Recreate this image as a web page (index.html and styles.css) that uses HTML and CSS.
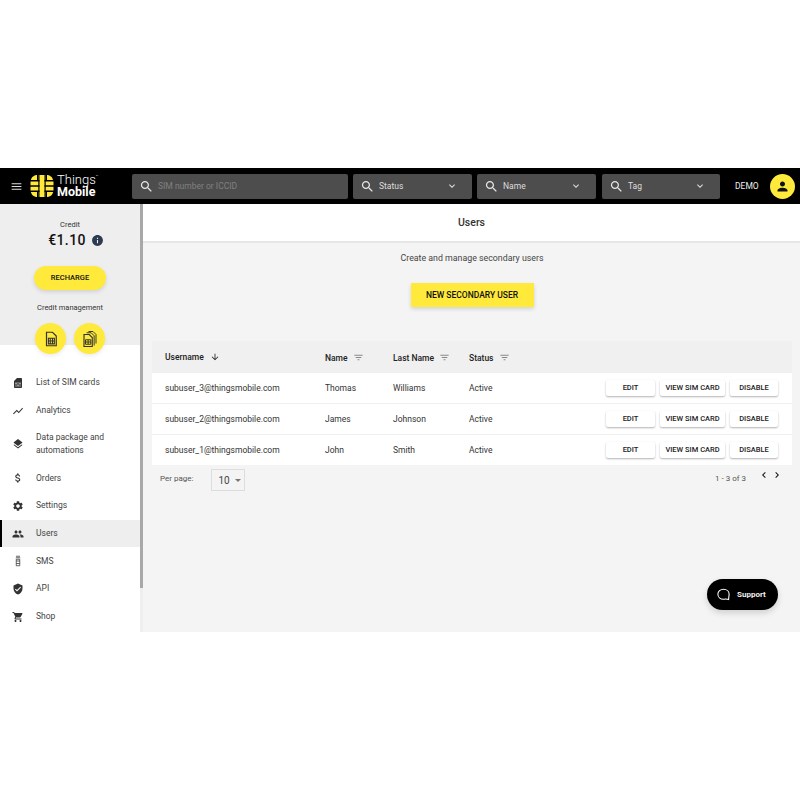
FILE: index.html
```html
<!DOCTYPE html>
<html lang="en">
<head>
    <meta charset="UTF-8">
    <title>Users - Things Mobile</title>
    <link rel="stylesheet" href="styles.css">
</head>
<body>
    <svg class="defs" width="0" height="0">
        <symbol id="i-search" viewBox="0 0 24 24"><path d="M15.5 14h-.79l-.28-.27C15.41 12.59 16 11.11 16 9.5 16 5.91 13.09 3 9.5 3S3 5.91 3 9.5 5.91 16 9.5 16c1.61 0 3.09-.59 4.23-1.57l.27.28v.79l5 4.99L20.49 19l-4.99-5zm-6 0C7.01 14 5 11.99 5 9.5S7.01 5 9.5 5 14 7.01 14 9.5 11.99 14 9.5 14z"/></symbol>
        <symbol id="i-more" viewBox="0 0 24 24"><path d="M16.59 8.59L12 13.17 7.41 8.59 6 10l6 6 6-6z"/></symbol>
        <symbol id="i-filter" viewBox="0 0 24 24"><path d="M10 18h4v-2h-4v2zM3 6v2h18V6H3zm3 7h12v-2H6v2z"/></symbol>
        <symbol id="i-simcard" viewBox="0 0 24 24"><path fill="none" stroke="#333" stroke-width="1.6" d="M6 3h8l5 5v13H6z"/><path fill="none" stroke="#333" stroke-width="1.4" d="M8.5 11h8v7.500h-8zM11 11v7.500M14 11v7.500M8.500 14.700h8"/></symbol>
        <symbol id="i-simcards" viewBox="0 0 24 24"><path fill="none" stroke="#333" stroke-width="1.3" d="M10 2h6l4 4v12M7.500 3.700h6l4 4v13"/><path fill="none" stroke="#333" stroke-width="1.500" d="M4 6h7l4 4v12H4z"/><path fill="none" stroke="#333" stroke-width="1.300" d="M6 13h7v6H6zM6 16h7M9.500 13v6"/></symbol>
    </svg>

    <div class="app">
        <header class="topbar">
            <svg class="menu-icon" viewBox="0 0 24 24"><path d="M3 18h18v-2H3v2zm0-5h18v-2H3v2zm0-7v2h18V6H3z"/></svg>
            <div class="logo">
                <svg class="logo-chip" viewBox="0 0 24 22">
                    <path fill="#ffe93b" d="M8 0h8c4 0 6.500 2 7 5H0.900C1.500 2 4 0 8 0zM0.500 6.500h23v3.700h-23zM0.500 11.700h23v3.700h-23zM0.900 17h22.200c-.5 3-3 5-7.100 5H8c-4 0-6.500-2-7.100-5z"/>
                    <path fill="#000" d="M7 0h1.300v5.500H7zM15.700 0H17v5.500h-1.300zM7 16.500h1.300V22H7zM15.700 16.500H17V22h-1.300z"/>
                    <path fill="#ffe93b" d="M9.500 0h5v22h-5z"/>
                    <path fill="#000" d="M8.300 0h1.200v22H8.300zM14.500 0h1.200v22h-1.200z"/>
                </svg>
                <div class="logo-text">
                    <span class="logo-top">Things<sup>™</sup></span>
                    <span class="logo-bottom">Mobile</span>
                </div>
            </div>
            <div class="field field-sim">
                <svg class="field-search"><use href="#i-search"/></svg>
                <span class="field-hint">SIM number or ICCID</span>
            </div>
            <div class="field field-status">
                <svg class="field-search"><use href="#i-search"/></svg>
                <span class="field-label">Status</span>
                <svg class="field-more"><use href="#i-more"/></svg>
            </div>
            <div class="field field-name">
                <svg class="field-search"><use href="#i-search"/></svg>
                <span class="field-label">Name</span>
                <svg class="field-more"><use href="#i-more"/></svg>
            </div>
            <div class="field field-tag">
                <svg class="field-search"><use href="#i-search"/></svg>
                <span class="field-label">Tag</span>
                <svg class="field-more"><use href="#i-more"/></svg>
            </div>
            <span class="demo">DEMO</span>
            <div class="avatar">
                <svg viewBox="0 0 24 24"><path d="M12 12c2.210 0 4-1.790 4-4s-1.790-4-4-4-4 1.790-4 4 1.790 4 4 4zm0 2c-2.670 0-8 1.340-8 4v2h16v-2c0-2.660-5.330-4-8-4z"/></svg>
            </div>
        </header>

        <div class="content">
            <aside class="sidebar">
                <div class="credit">
                    <div class="credit-label">Credit</div>
                    <div class="credit-value">
                        <span>€1.10</span>
                        <svg class="info-icon" viewBox="0 0 24 24"><path d="M12 2C6.480 2 2 6.480 2 12s4.480 10 10 10 10-4.480 10-10S17.520 2 12 2zm1 15h-2v-6h2v6zm0-8h-2V7h2v2z"/></svg>
                    </div>
                    <div class="progress"><div class="progress-fill" style="width: 10%;"></div></div>
                    <div class="recharge">RECHARGE</div>
                    <div class="credit-sub">Credit management</div>
                    <div class="credit-actions">
                        <div class="round-btn"><svg><use href="#i-simcard"/></svg></div>
                        <div class="round-btn"><svg><use href="#i-simcards"/></svg></div>
                    </div>
                </div>
                <nav class="nav">
                    <div class="nav-item">
                        <svg viewBox="0 0 24 24"><path d="M19.990 4c0-1.100-.890-2-1.990-2h-8L4 8v12c0 1.100.900 2 2 2h12c1.100 0 2-.900 2-2l-.010-16zM9 19H7v-2h2v2zm8 0h-2v-2h2v2zm-8-4H7v-4h2v4zm4 4h-2v-4h2v4zm0-6h-2v-2h2v2zm4 2h-2v-4h2v4z"/></svg>
                        <span>List of SIM cards</span>
                    </div>
                    <div class="nav-item">
                        <svg viewBox="0 0 24 24"><path d="M3.500 18.490l6-6.010 4 4L22 6.920l-1.410-1.410-7.090 7.970-4-4L2 16.990z"/></svg>
                        <span>Analytics</span>
                    </div>
                    <div class="nav-item nav-item-tall">
                        <svg viewBox="0 0 24 24"><path d="M11.990 18.540l-7.370-5.730L3 14.070l9 7 9-7-1.630-1.270-7.380 5.740zM12 16l7.360-5.730L21 9l-9-7-9 7 1.630 1.270L12 16z"/></svg>
                        <span>Data package and automations</span>
                    </div>
                    <div class="nav-item">
                        <svg viewBox="0 0 24 24"><path d="M11.800 10.900c-2.270-.590-3-1.200-3-2.150 0-1.090 1.010-1.850 2.700-1.850 1.780 0 2.440.850 2.500 2.100h2.210c-.070-1.720-1.120-3.300-3.210-3.810V3h-3v2.160c-1.940.420-3.500 1.680-3.500 3.610 0 2.310 1.910 3.460 4.700 4.130 2.500.600 3 1.480 3 2.410 0 .690-.490 1.790-2.700 1.790-2.060 0-2.870-.920-2.980-2.100h-2.200c.120 2.190 1.760 3.420 3.680 3.830V21h3v-2.150c1.950-.370 3.500-1.500 3.500-3.550 0-2.840-2.430-3.810-4.700-4.400z"/></svg>
                        <span>Orders</span>
                    </div>
                    <div class="nav-item">
                        <svg viewBox="0 0 24 24"><path d="M19.140 12.940c.040-.300.060-.610.060-.940 0-.320-.020-.640-.070-.940l2.030-1.580c.180-.140.230-.410.120-.610l-1.920-3.320c-.120-.220-.370-.290-.590-.220l-2.390.960c-.500-.380-1.030-.700-1.620-.940l-.360-2.540c-.040-.240-.240-.410-.480-.410h-3.840c-.240 0-.430.170-.470.410l-.360 2.540c-.590.240-1.130.570-1.620.940l-2.390-.960c-.220-.080-.470 0-.590.220L2.740 8.870c-.120.210-.080.470.120.610l2.030 1.580c-.050.300-.090.630-.090.940s.020.640.070.940l-2.030 1.580c-.180.140-.230.410-.120.610l1.920 3.320c.120.220.370.290.590.220l2.390-.960c.500.380 1.030.700 1.620.940l.360 2.540c.050.240.240.410.480.410h3.840c.240 0 .440-.170.470-.410l.360-2.540c.590-.240 1.130-.560 1.620-.940l2.390.960c.220.080.470 0 .590-.220l1.920-3.320c.120-.220.070-.470-.120-.610l-2.010-1.580zM12 15.600c-1.980 0-3.600-1.620-3.600-3.600s1.620-3.600 3.600-3.600 3.600 1.620 3.600 3.600-1.620 3.600-3.600 3.600z"/></svg>
                        <span>Settings</span>
                    </div>
                    <div class="nav-item nav-item-active">
                        <svg viewBox="0 0 24 24"><path d="M16 11c1.660 0 2.990-1.340 2.990-3S17.660 5 16 5c-1.660 0-3 1.340-3 3s1.340 3 3 3zm-8 0c1.660 0 2.990-1.340 2.990-3S9.660 5 8 5C6.340 5 5 6.340 5 8s1.340 3 3 3zm0 2c-2.330 0-7 1.170-7 3.500V19h14v-2.500c0-2.330-4.670-3.500-7-3.500zm8 0c-.290 0-.620.020-.970.050 1.160.840 1.970 1.970 1.970 3.450V19h6v-2.500c0-2.330-4.670-3.500-7-3.500z"/></svg>
                        <span>Users</span>
                    </div>
                    <div class="nav-item">
                        <svg viewBox="0 0 24 24"><path fill="none" stroke="#333" stroke-width="1.500" d="M8 2.500h8M7.500 5.500h9M8.500 8.500h7v13h-7zM8.500 12h7M8.500 17h7"/></svg>
                        <span>SMS</span>
                    </div>
                    <div class="nav-item">
                        <svg viewBox="0 0 24 24"><path d="M12 1L3 5v6c0 5.550 3.840 10.740 9 12 5.160-1.260 9-6.450 9-12V5l-9-4zm-2 16l-4-4 1.410-1.410L10 14.170l6.590-6.590L18 9l-8 8z"/></svg>
                        <span>API</span>
                    </div>
                    <div class="nav-item">
                        <svg viewBox="0 0 24 24"><path d="M7 18c-1.100 0-1.990.900-1.990 2S5.900 22 7 22s2-.900 2-2-.900-2-2-2zM1 2v2h2l3.600 7.590-1.350 2.450c-.160.280-.250.610-.250.960 0 1.100.900 2 2 2h12v-2H7.420c-.140 0-.250-.110-.250-.250l.030-.120.900-1.830h7.450c.750 0 1.410-.410 1.750-1.030l3.580-6.490c.080-.140.120-.310.120-.480 0-.550-.450-1-1-1H5.210l-.940-2H1zm16 16c-1.100 0-1.990.900-1.990 2s.890 2 1.990 2 2-.900 2-2-.900-2-2-2z"/></svg>
                        <span>Shop</span>
                    </div>
                </nav>
            </aside>
            <div class="scrollbar"><div class="scrollbar-thumb"></div></div>

            <main class="main">
                <div class="page-title">Users</div>
                <div class="page-body">
                    <p class="page-sub">Create and manage secondary users</p>
                    <div class="new-user">NEW SECONDARY USER</div>

                    <table class="users">
                        <thead>
                            <tr>
                                <th class="col-user">Username <svg class="sort-icon" viewBox="0 0 24 24"><path d="M20 12l-1.410-1.410L13 16.170V4h-2v12.170l-5.580-5.590L4 12l8 8 8-8z"/></svg></th>
                                <th class="col-name">Name <svg class="filter-icon"><use href="#i-filter"/></svg></th>
                                <th class="col-last">Last Name <svg class="filter-icon"><use href="#i-filter"/></svg></th>
                                <th class="col-status">Status <svg class="filter-icon"><use href="#i-filter"/></svg></th>
                                <th></th>
                            </tr>
                        </thead>
                        <tbody>
                            <tr>
                                <td>subuser_3@thingsmobile.com</td>
                                <td>Thomas</td>
                                <td>Williams</td>
                                <td>Active</td>
                                <td><div class="actions"><span class="btn btn-edit">EDIT</span><span class="btn btn-view">VIEW SIM CARD</span><span class="btn btn-disable">DISABLE</span></div></td>
                            </tr>
                            <tr>
                                <td>subuser_2@thingsmobile.com</td>
                                <td>James</td>
                                <td>Johnson</td>
                                <td>Active</td>
                                <td><div class="actions"><span class="btn btn-edit">EDIT</span><span class="btn btn-view">VIEW SIM CARD</span><span class="btn btn-disable">DISABLE</span></div></td>
                            </tr>
                            <tr>
                                <td>subuser_1@thingsmobile.com</td>
                                <td>John</td>
                                <td>Smith</td>
                                <td>Active</td>
                                <td><div class="actions"><span class="btn btn-edit">EDIT</span><span class="btn btn-view">VIEW SIM CARD</span><span class="btn btn-disable">DISABLE</span></div></td>
                            </tr>
                        </tbody>
                    </table>

                    <div class="pager">
                        <span class="per-page">Per page:</span>
                        <div class="per-select"><span>10</span><i class="caret"></i></div>
                        <span class="pager-count">1 - 3 of 3</span>
                        <div class="pager-arrows">
                            <svg viewBox="0 0 24 24"><path d="M15.410 7.410L14 6l-6 6 6 6 1.410-1.410L10.830 12z"/></svg>
                            <svg viewBox="0 0 24 24"><path d="M10 6L8.590 7.410 13.170 12l-4.580 4.580L10 18l6-6z"/></svg>
                        </div>
                    </div>
                </div>

                <div class="support">
                    <svg viewBox="0 0 24 24"><path fill="none" stroke="#fff" stroke-width="1.700" d="M12 3.500c5 0 9 3.300 9 8 0 2.500-.8 5-.8 8.500-2-.8-3.500-1-5-.9-.9.200-2 .4-3.200.4-5 0-9-3.300-9-8s4-8 9-8z"/></svg>
                    <span>Support</span>
                </div>
            </main>
        </div>
    </div>
</body>
</html>
```

FILE: styles.css
```css
body {
    margin: 0;
    padding-top: 168px;
    background: #fff;
    font-family: Roboto, "Liberation Sans", sans-serif;
    color: #333;
}
.defs {
    display: block;
    height: 0;
}

.app {
    height: 464px;
    display: flex;
    flex-direction: column;
    overflow: hidden;
}

/* top bar */
.topbar {
    height: 36px;
    flex: none;
    background: #000;
    display: flex;
    align-items: center;
    box-sizing: border-box;
    padding-left: 10px;
}
.menu-icon {
    width: 13px;
    height: 13px;
    fill: #ddd;
    flex: none;
}
.logo {
    display: flex;
    align-items: center;
    width: 102px;
    margin-left: 7px;
    flex: none;
    gap: 3px;
}
.logo-chip {
    width: 24px;
    height: 22px;
    flex: none;
}
.logo-text {
    display: flex;
    flex-direction: column;
    color: #fff;
    line-height: 12px;
}
.logo-top {
    font-size: 13px;
    font-weight: 300;
}
.logo-top sup {
    font-size: 4px;
    vertical-align: 6px;
    line-height: 0;
}
.logo-bottom {
    font-size: 12.5px;
    font-weight: 700;
}
.field {
    height: 25px;
    background: #4d4d4d;
    border-radius: 2px;
    display: flex;
    align-items: center;
    box-sizing: border-box;
    padding: 0 14px 0 7px;
    margin-right: 5px;
    flex: none;
}
.field-sim { width: 216px; }
.field-status { width: 119px; }
.field-name { width: 119px; }
.field-tag { width: 118px; margin-left: 1px; }
.field-search {
    width: 15px;
    height: 15px;
    fill: #e8e8e8;
    flex: none;
}
.field-hint {
    margin-left: 4px;
    font-size: 8.500px;
    color: #808080;
}
.field-label {
    margin-left: 4px;
    font-size: 8.500px;
    color: #ddd;
    flex: 1;
}
.field-more {
    width: 12px;
    height: 12px;
    fill: #ddd;
    flex: none;
}
.demo {
    margin-left: 10px;
    font-size: 8.500px;
    color: #eee;
}
.avatar {
    width: 25px;
    height: 25px;
    margin-left: 11px;
    box-sizing: border-box;
    border-radius: 50%;
    background: #ffe93b;
    display: flex;
    align-items: center;
    justify-content: center;
    flex: none;
}
.avatar svg {
    width: 15px;
    height: 15px;
    fill: #111;
}

.content {
    flex: 1;
    display: flex;
    min-height: 0;
}

/* sidebar */
.sidebar {
    width: 140px;
    flex: none;
    background: #fff;
    overflow: hidden;
}
.credit {
    background: #eee;
    height: 141px;
    box-sizing: border-box;
    padding-top: 16px;
    display: flex;
    flex-direction: column;
    align-items: center;
}
.credit-label {
    font-size: 7.500px;
    line-height: 9px;
    color: #333;
}
.credit-value {
    margin-top: 3px;
    display: flex;
    align-items: center;
    font-size: 14px;
    line-height: 17px;
    font-weight: 500;
    letter-spacing: .4px;
    color: #111;
    gap: 5px;
    padding-left: 12px;
}
.info-icon {
    width: 13px;
    height: 13px;
    fill: #2c3a52;
}
.progress {
    width: 118px;
    height: 5px;
    margin-top: 6px;
    background: #fff;
    border-radius: 3px;
    overflow: hidden;
}
.progress-fill {
    height: 100%;
    background: #ffe93b;
}
.recharge {
    width: 72px;
    height: 24px;
    margin-top: 11px;
    border-radius: 12px;
    background: #ffe93b;
    box-shadow: 0 2px 4px rgba(0,0,0,.12);
    font-size: 7.500px;
    font-weight: 500;
    line-height: 24px;
    text-align: center;
    color: #111;
}
.credit-sub {
    margin-top: 13px;
    font-size: 7.500px;
    line-height: 10px;
}
.credit-actions {
    margin-top: 10px;
    display: flex;
    gap: 8px;
    position: relative;
}
.round-btn {
    width: 31px;
    height: 31px;
    border-radius: 50%;
    background: #ffe93b;
    box-shadow: 0 2px 4px rgba(0,0,0,.08);
    display: flex;
    align-items: center;
    justify-content: center;
}
.round-btn svg {
    width: 18px;
    height: 18px;
}
.nav {
    padding-top: 24px;
}
.nav-item {
    height: 27.700px;
    display: flex;
    align-items: center;
    padding-left: 12px;
    box-sizing: border-box;
    font-size: 8.500px;
    line-height: 13px;
    color: #444;
}
.nav-item svg {
    width: 12px;
    height: 12px;
    fill: #333;
    flex: none;
    margin-right: 12px;
}
.nav-item-tall {
    height: 40px;
}
.nav-item-active {
    background: #eee;
    border-left: 2px solid #000;
    padding-left: 10px;
}

.scrollbar {
    width: 3px;
    flex: none;
    background: #eee;
}
.scrollbar-thumb {
    height: 384px;
    background: #a8a8a8;
}

/* main */
.main {
    flex: 1;
    min-width: 0;
    position: relative;
    background: #f4f4f4;
    display: flex;
    flex-direction: column;
}
.page-title {
    height: 39px;
    box-sizing: border-box;
    background: #fff;
    border-bottom: 2px solid #e6e6e6;
    text-align: center;
    font-size: 10.500px;
    font-weight: 500;
    line-height: 37px;
    color: #333;
}
.page-body {
    padding: 0 8px 0 9px;
    display: flex;
    flex-direction: column;
}
.page-sub {
    margin: 9px 0 0;
    text-align: center;
    font-size: 8.800px;
    line-height: 12px;
    color: #444;
}
.new-user {
    align-self: center;
    width: 123px;
    height: 24px;
    margin-top: 19px;
    background: #ffe93b;
    border-radius: 1px;
    box-shadow: 0 2px 4px rgba(0,0,0,.14);
    font-size: 8.500px;
    font-weight: 500;
    line-height: 24px;
    text-align: center;
    color: #111;
}
.users {
    margin-top: 34px;
    width: 640px;
    border-collapse: collapse;
    table-layout: fixed;
    font-size: 8.500px;
}
.users th {
    height: 32px;
    padding: 0;
    background: #f0f0f0;
    text-align: left;
    font-weight: 500;
    color: #222;
    white-space: nowrap;
}
.users td {
    height: 30px;
    padding: 0;
    background: #fff;
    border-top: 1px solid #f0f0f0;
    color: #333;
}
.users tbody tr:first-child td {
    height: 30px;
    border-top: 0;
}
.users th:first-child,
.users td:first-child {
    padding-left: 13px;
}
.col-user { width: 160px; }
.col-name { width: 68px; }
.col-last { width: 76px; }
.col-status { width: 136px; }
.sort-icon {
    width: 10px;
    height: 10px;
    margin-left: 4px;
    vertical-align: -2px;
    fill: #222;
}
.filter-icon {
    width: 11px;
    height: 11px;
    margin-left: 3px;
    vertical-align: -2.500px;
    fill: #888;
}
.actions {
    display: flex;
    justify-content: flex-end;
    gap: 5px;
    padding-right: 14px;
}
.btn {
    height: 16px;
    border-radius: 2px;
    background: #fff;
    box-shadow: 0 1px 2px rgba(0,0,0,.3);
    font-size: 7.500px;
    font-weight: 500;
    line-height: 16px;
    text-align: center;
    color: #222;
}
.btn-edit { width: 49px; }
.btn-view { width: 65px; }
.btn-disable { width: 48px; }

.pager {
    display: flex;
    align-items: flex-start;
    padding: 4px 0 0 8px;
}
.per-page {
    font-size: 8px;
    line-height: 20px;
    color: #555;
}
.per-select {
    width: 34px;
    height: 22px;
    box-sizing: border-box;
    margin-left: 18px;
    border: 1px solid #ddd;
    display: flex;
    align-items: center;
    padding-left: 6px;
    font-size: 10px;
    color: #444;
}
.caret {
    margin-left: 5px;
    border: 3px solid transparent;
    border-top-color: #777;
    border-bottom: 0;
}
.pager-count {
    margin-left: auto;
    font-size: 8px;
    line-height: 20px;
    color: #555;
}
.pager-arrows {
    display: flex;
    gap: 1px;
    margin-left: 12px;
    margin-right: 9px;
}
.pager-arrows svg {
    width: 12px;
    height: 12px;
    fill: #111;
}

/* floating support button */
.support {
    position: absolute;
    right: 22px;
    bottom: 22px;
    width: 71px;
    height: 31px;
    border-radius: 16px;
    background: #000;
    box-shadow: 0 3px 6px rgba(0,0,0,.15);
    display: flex;
    align-items: center;
    box-sizing: border-box;
    padding-left: 9px;
    gap: 6px;
    color: #f2f2f2;
    font-size: 8px;
    font-weight: 700;
}
.support svg {
    width: 15px;
    height: 15px;
    flex: none;
}
```
